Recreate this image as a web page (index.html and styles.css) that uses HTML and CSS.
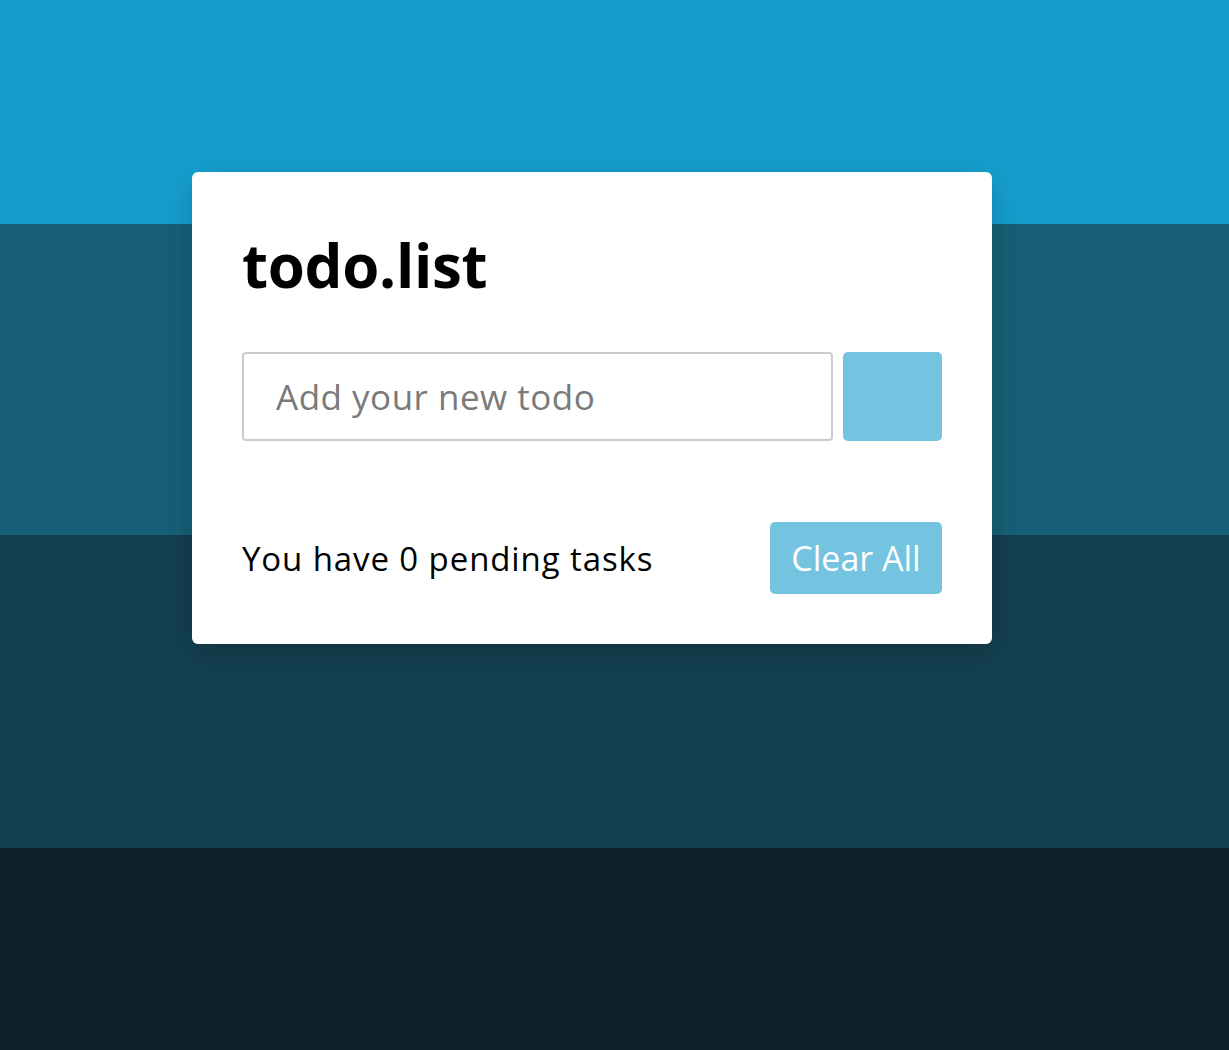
FILE: index.html
```html
<!DOCTYPE html>
<html lang="en">
<head>
<meta charset="utf-8">
<title>todo.list</title>
<link rel="stylesheet" href="styles.css">
</head>
<body>
<main class="wrapper">
  <h1 class="title">todo.list</h1>
  <div class="input-row">
    <input class="todo-input" type="text" placeholder="Add your new todo">
    <button class="add-btn" aria-label="Add"></button>
  </div>
  <ul class="todo-list"></ul>
  <div class="footer">
    <span class="pending">You have 0 pending tasks</span>
    <button class="clear-btn">Clear All</button>
  </div>
</main>
</body>
</html>
```
FILE: styles.css
```css
* { box-sizing: border-box; }
html, body { height: 100%; }
body {
  margin: 0;
  font-family: "Open Sans", "Liberation Sans", sans-serif;
  background: linear-gradient(to bottom,
    #159dcc 0px, #159dcc 224px,
    #175f76 224px, #175f76 535px,
    #144050 535px, #144050 848px,
    #0f2129 848px, #0f2129 100%);
  display: flex;
  justify-content: center;
  padding: 172px 45px 0 0;
}
.wrapper {
  width: 800px;
  height: 472px;
  background: #fff;
  border-radius: 6px;
  padding: 50px;
  box-shadow: 0 10px 30px rgba(0, 0, 0, 0.18);
}
.title {
  margin: 0 0 50px;
  font-size: 60px;
  line-height: 80px;
  font-weight: 700;
  color: #000;
  letter-spacing: -0.3px;
  transform: translateY(3px);
}
.input-row {
  display: flex;
  gap: 10px;
  height: 89px;
}
.todo-input {
  flex: 1;
  height: 100%;
  border: 2px solid #ccc;
  border-radius: 4px;
  padding: 0 32px;
  font-family: inherit;
  font-size: 35px;
  letter-spacing: 0.5px;
  color: #333;
  outline: none;
}
.todo-input::placeholder { color: #7a7a7a; }
.add-btn {
  width: 99px;
  height: 100%;
  border: none;
  border-radius: 5px;
  background: #74c4e1;
}
.todo-list { margin: 0; padding: 0; list-style: none; }
.footer {
  margin-top: 81px;
  display: flex;
  align-items: center;
  justify-content: space-between;
}
.pending {
  font-size: 33px;
  letter-spacing: 0.9px;
  color: #000;
}
.clear-btn {
  height: 72px;
  width: 172px;
  padding: 0;
  border: none;
  border-radius: 5px;
  background: #74c4e1;
  color: #fff;
  font-family: inherit;
  font-size: 34px;
}
```
